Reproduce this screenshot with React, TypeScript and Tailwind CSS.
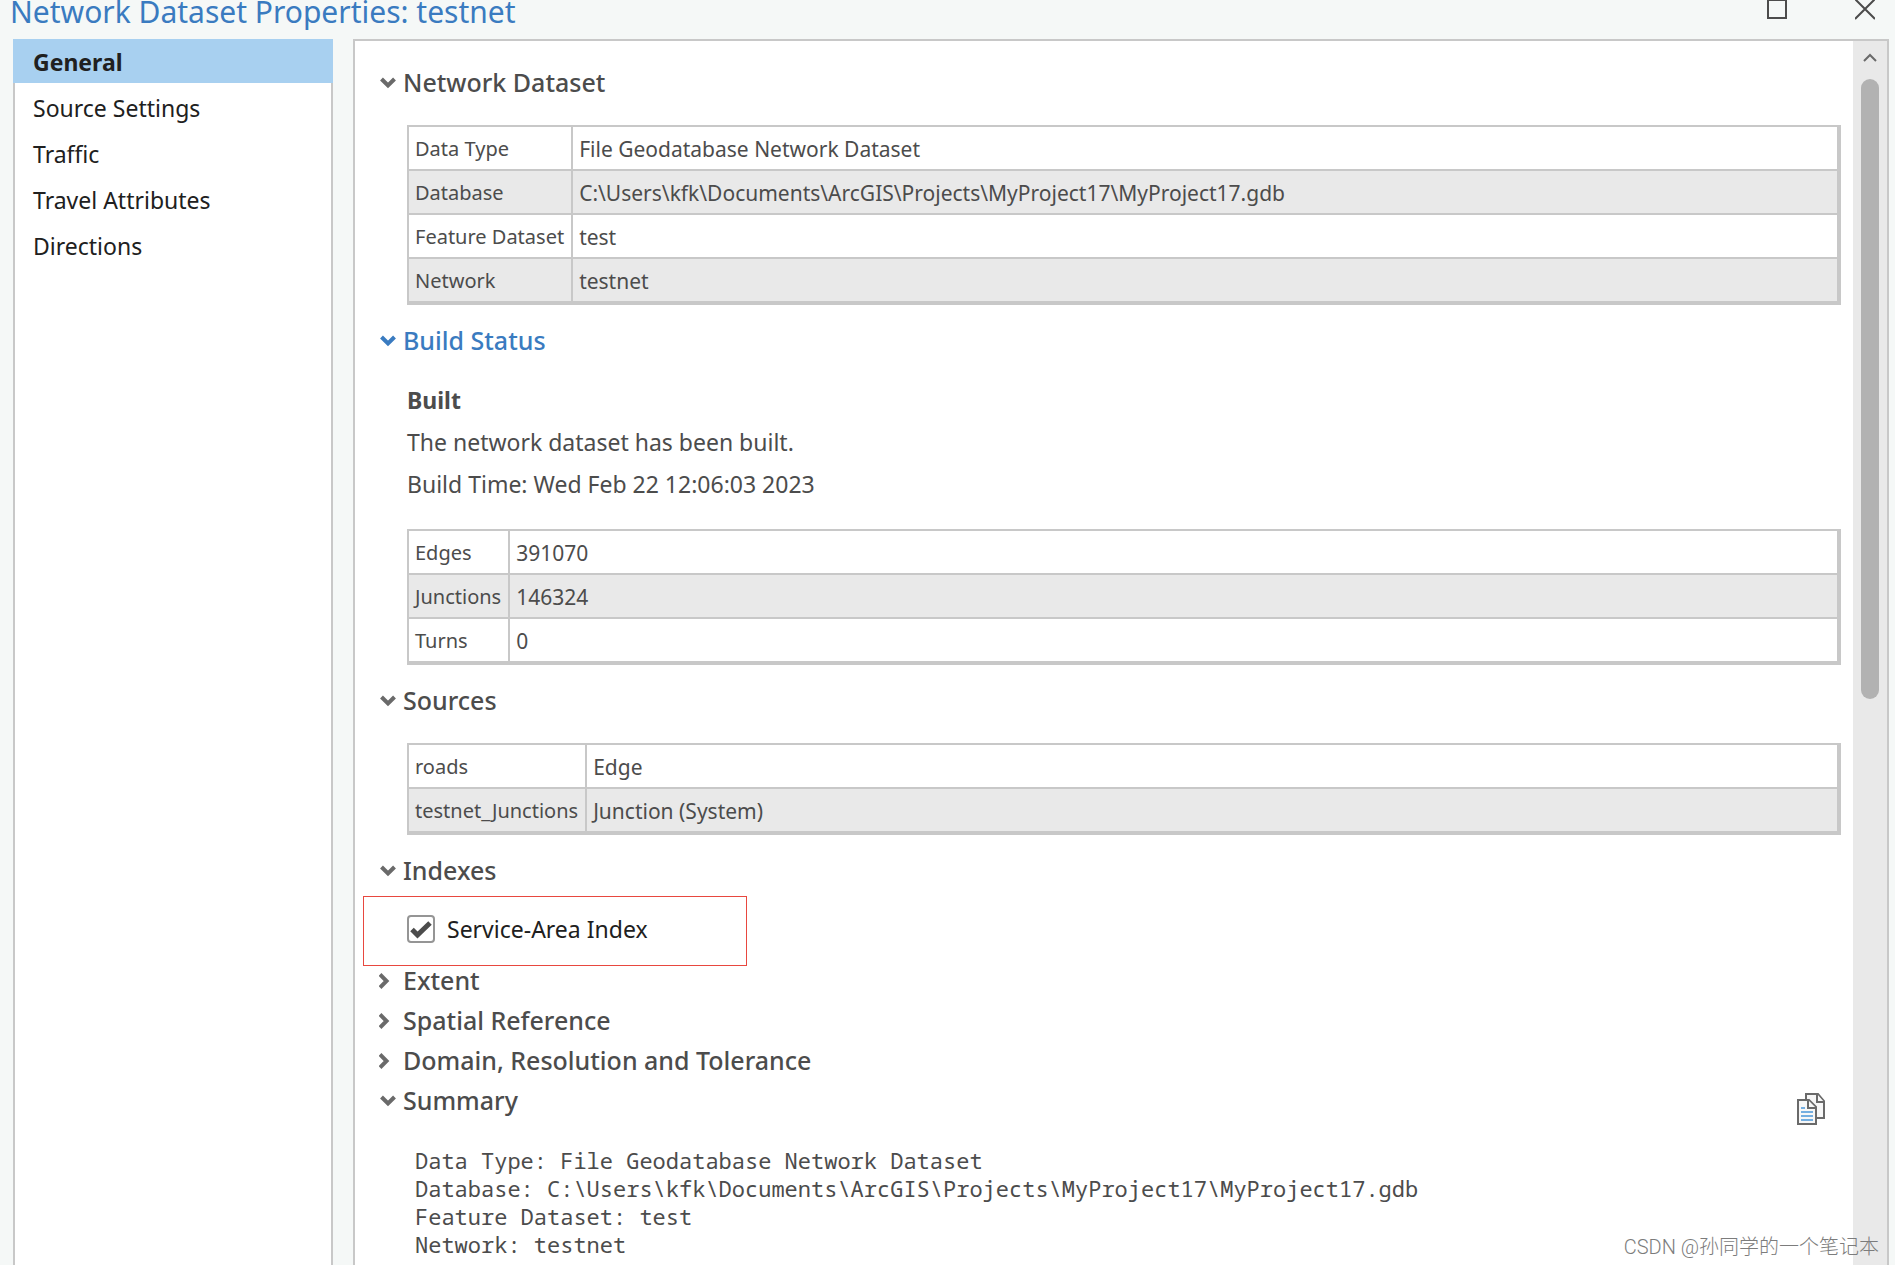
import { useState } from "react";
import type { ReactNode } from "react";

type Row = [string, string];

const navItems = ["General", "Source Settings", "Traffic", "Travel Attributes", "Directions"];

const datasetRows: Row[] = [
  ["Data Type", "File Geodatabase Network Dataset"],
  ["Database", "C:\\Users\\kfk\\Documents\\ArcGIS\\Projects\\MyProject17\\MyProject17.gdb"],
  ["Feature Dataset", "test"],
  ["Network", "testnet"],
];

const buildRows: Row[] = [
  ["Edges", "391070"],
  ["Junctions", "146324"],
  ["Turns", "0"],
];

const sourceRows: Row[] = [
  ["roads", "Edge"],
  ["testnet_Junctions", "Junction (System)"],
];

const summary = [
  "Data Type: File Geodatabase Network Dataset",
  "Database: C:\\Users\\kfk\\Documents\\ArcGIS\\Projects\\MyProject17\\MyProject17.gdb",
  "Feature Dataset: test",
  "Network: testnet",
].join("\n");

function Chevron({ open }: { open: boolean }) {
  return open ? (
    <svg width="18" height="12" viewBox="0 0 18 12" fill="none" stroke="currentColor" strokeWidth="4">
      <path d="M2.500 2 9 8.500 15.500 2" />
    </svg>
  ) : (
    <svg width="12" height="18" viewBox="0 0 12 18" fill="none" stroke="currentColor" strokeWidth="4">
      <path d="M1 2.500 7.500 9 1 15.500" />
    </svg>
  );
}

interface SectionProps {
  title: string;
  defaultOpen?: boolean;
  highlighted?: boolean;
  action?: ReactNode;
  children?: ReactNode;
}

function Section({ title, defaultOpen = false, highlighted = false, action, children }: SectionProps) {
  const [open, setOpen] = useState(defaultOpen);

  return (
    <section>
      <div className="flex h-10 items-center justify-between pr-7">
        <h2>
          <button
            type="button"
            aria-expanded={open}
            onClick={() => setOpen(!open)}
            className={
              highlighted
                ? "flex h-10 items-center pb-[2px] text-[25px] font-medium text-[#3a7bc0]"
                : "flex h-10 items-center pb-[2px] text-[25px] font-medium text-[#4c4c4c]"
            }
          >
            <span className={highlighted ? "flex w-6" : "flex w-6 text-[#6a6a6a]"}>
              <Chevron open={open} />
            </span>
            {title}
          </button>
        </h2>
        {action}
      </div>
      {open && children && <div className="pl-7">{children}</div>}
    </section>
  );
}

function PropertyTable({ rows, label }: { rows: Row[]; label: string }) {
  return (
    <div className="mt-[21px] mb-[17px] mr-3 border-r-2 border-b-2 border-[#c8c8c8]">
      <table aria-label={label} className="w-full border-separate border-spacing-0 border-t-2 border-l-2 border-[#c8c8c8] leading-7 text-[#4c4c4c]">
        <tbody>
          {rows.map(([name, value]) => (
            <tr key={name} className="h-11 even:bg-[#e9e9e9]">
              <th scope="row" className="w-px border-r-2 border-b-2 border-[#c8c8c8] pt-[2px] pr-[7px] pl-[6px] text-left text-xl font-normal whitespace-nowrap">
                {name}
              </th>
              <td className="border-r-2 border-b-2 border-[#c8c8c8] px-[6px] pt-[2px] text-[21px]">{value}</td>
            </tr>
          ))}
        </tbody>
      </table>
    </div>
  );
}

function CopyIcon() {
  return (
    <svg width="28" height="32" viewBox="0 0 28 32" fill="#f7f7f7" stroke="#6a6a6a" strokeWidth="2">
      <path d="M9 1h12l6 7v17H9z" />
      <path d="M20 1v8h7" />
      <path d="M1 7h11l7 7v17H1z" />
      <path d="M11 7v8h8" />
      <path d="M4 15h4M4 19h12M4 23h12M4 27h12" stroke="#74aee0" />
    </svg>
  );
}

export default function App() {
  const [active, setActive] = useState("General");
  const [indexed, setIndexed] = useState(true);

  return (
    <div className="relative flex h-screen flex-col overflow-hidden bg-[#f5f8f7] font-['Noto_Sans','Segoe_UI',sans-serif]">
      <header className="flex h-[39px] shrink-0 items-start justify-between pr-5 pl-[10px]">
        <h1 className="text-3xl leading-6 text-[#3a7bc0]">Network Dataset Properties: testnet</h1>
        <div className="flex gap-[68px] text-[#4c4c4c]">
          <button type="button" aria-label="Maximize">
            <svg width="20" height="20" viewBox="0 0 20 20" fill="none" stroke="currentColor" strokeWidth="2">
              <path d="M1 0h18v18H1z" />
            </svg>
          </button>
          <button type="button" aria-label="Close">
            <svg width="20" height="20" viewBox="0 0 20 20" fill="none" stroke="currentColor" strokeWidth="2">
              <path d="M0-1 20 19M20-1 0 19" />
            </svg>
          </button>
        </div>
      </header>

      <div className="flex min-h-0 flex-1 gap-5 pr-[6px] pl-[13px]">
        <nav className="w-80 shrink-0 border-x-2 border-[#c8c8c8] bg-white">
          <ul>
            {navItems.map((item) => (
              <li key={item} className="mb-[2px]">
                <button
                  type="button"
                  onClick={() => setActive(item)}
                  className={
                    item === active
                      ? "-mx-[2px] block h-11 w-80 bg-[#a8d0f0] px-5 pt-[2px] text-left text-[23px] font-bold text-[#202020]"
                      : "-mx-[2px] block h-11 w-80 px-5 pt-[2px] text-left text-[23px] text-[#202020]"
                  }
                >
                  {item}
                </button>
              </li>
            ))}
          </ul>
        </nav>

        <div className="flex min-w-0 flex-1 border-2 border-b-0 border-[#c8c8c8] bg-white">
          <main className="min-w-0 flex-1 overflow-hidden pt-[23px] pl-6">
            <Section title="Network Dataset" defaultOpen>
              <PropertyTable rows={datasetRows} label="Network Dataset" />
            </Section>

            <Section title="Build Status" defaultOpen highlighted>
              <div className="mt-[17px] mb-6 text-[23px] leading-[42px] text-[#4c4c4c]">
                <p className="font-bold">Built</p>
                <p>The network dataset has been built.</p>
                <p>Build Time: Wed Feb 22 12:06:03 2023</p>
              </div>
              <PropertyTable rows={buildRows} label="Build Status" />
            </Section>

            <Section title="Sources" defaultOpen>
              <PropertyTable rows={sourceRows} label="Sources" />
            </Section>

            <Section title="Indexes" defaultOpen>
              <div className="relative flex h-[70px] items-center pt-1">
                <div className="pointer-events-none absolute top-1 -bottom-1 -left-11 w-96 border border-[#e8483f]" />
                <label className="flex items-center gap-3 text-[23px] text-[#202020]">
                  <span className="relative flex">
                    <input
                      type="checkbox"
                      checked={indexed}
                      onChange={(e) => setIndexed(e.target.checked)}
                      className="size-7 appearance-none rounded border-2 border-[#959595] bg-white"
                    />
                    {indexed && (
                      <svg className="pointer-events-none absolute inset-0" width="28" height="28" viewBox="0 0 28 28" fill="none" stroke="#4c4c4c" strokeWidth="5">
                        <path d="M5 14.500l5.500 5.500L23 8" />
                      </svg>
                    )}
                  </span>
                  Service-Area Index
                </label>
              </div>
            </Section>

            <Section title="Extent" />
            <Section title="Spatial Reference" />
            <Section title="Domain, Resolution and Tolerance" />

            <Section
              title="Summary"
              defaultOpen
              action={
                <button type="button" aria-label="Copy summary" className="mt-[14px]">
                  <CopyIcon />
                </button>
              }
            >
              <pre className="mt-6 pl-2 font-['Noto_Sans_Mono','Liberation_Mono',monospace] text-[22px] leading-7 text-[#4c4c4c]">{summary}</pre>
            </Section>
          </main>

          <div className="flex w-[34px] shrink-0 flex-col items-center bg-[#e9e9e9]">
            <button type="button" aria-label="Scroll up" className="flex h-[38px] items-center justify-center pb-1">
              <svg width="14" height="10" viewBox="0 0 14 10" fill="none" stroke="#6a6a6a" strokeWidth="2">
                <path d="M1 8l6-6 6 6" />
              </svg>
            </button>
            <div className="w-[18px] flex-[23] rounded-full bg-[#b2b2b2]" />
            <div className="flex-[21]" />
          </div>
        </div>
      </div>

      <div className="pointer-events-none absolute right-4 bottom-1 font-['Roboto','Noto_Sans_CJK_SC',sans-serif] text-xl font-light text-[#7c7c7c]">
        CSDN @孙同学的一个笔记本
      </div>
    </div>
  );
}
